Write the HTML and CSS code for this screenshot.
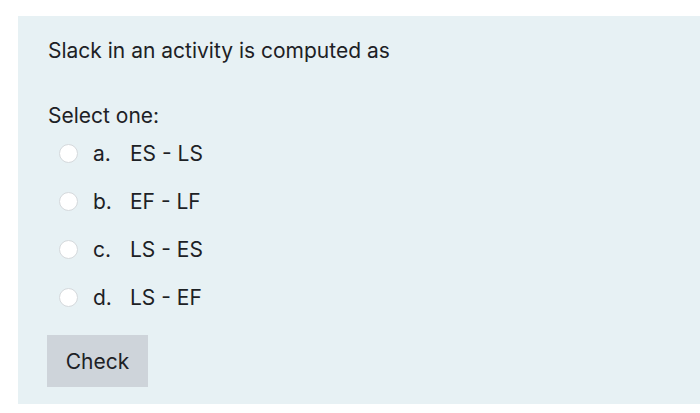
FILE: index.html
```html
<!DOCTYPE html>
<html>
<head>
<meta charset="utf-8">
<link rel="stylesheet" href="styles.css">
</head>
<body>
<div class="panel">
  <p class="qtext">Slack in an activity is computed as</p>
  <p class="prompt">Select one:</p>
  <div class="answers">
    <label class="option"><span class="radio"></span><span class="num">a.</span><span class="txt">ES - LS</span></label>
    <label class="option"><span class="radio"></span><span class="num">b.</span><span class="txt">EF - LF</span></label>
    <label class="option"><span class="radio"></span><span class="num">c.</span><span class="txt">LS - ES</span></label>
    <label class="option"><span class="radio"></span><span class="num">d.</span><span class="txt">LS - EF</span></label>
  </div>
  <button class="check">Check</button>
</div>
</body>
</html>
```
FILE: styles.css
```css
html, body {
  margin: 0;
  padding: 0;
  background: #ffffff;
}
body {
  font-family: Inter, "Noto Sans", sans-serif;
  color: #1d2125;
}
.panel {
  margin: 16px 0 0 18px;
  height: 388px;
  box-sizing: border-box;
  padding: 20px 30px 0 30px;
  background: #e7f1f4;
  display: flex;
  flex-direction: column;
  align-items: flex-start;
}
.qtext {
  margin: 0;
  font-size: 21px;
  line-height: 30px;
}
.prompt {
  margin: 35px 0 0 0;
  font-size: 21px;
  line-height: 30px;
}
.answers {
  margin-top: 7px;
  display: flex;
  flex-direction: column;
  gap: 18px;
}
.option {
  display: flex;
  align-items: center;
  height: 30px;
  font-size: 21px;
}
.radio {
  width: 17px;
  height: 17px;
  border: 1px solid #d5d9dc;
  border-radius: 50%;
  background: #ffffff;
  margin-left: 11px;
  margin-right: 15px;
  box-sizing: content-box;
}
.num {
  width: 37px;
}
.check {
  margin-top: 23px;
  margin-left: -1px;
  width: 101px;
  height: 52px;
  border: none;
  border-radius: 0;
  background: #ced4da;
  color: #1d2125;
  font-family: Inter, "Noto Sans", sans-serif;
  font-size: 21px;
  padding: 0;
}
```
